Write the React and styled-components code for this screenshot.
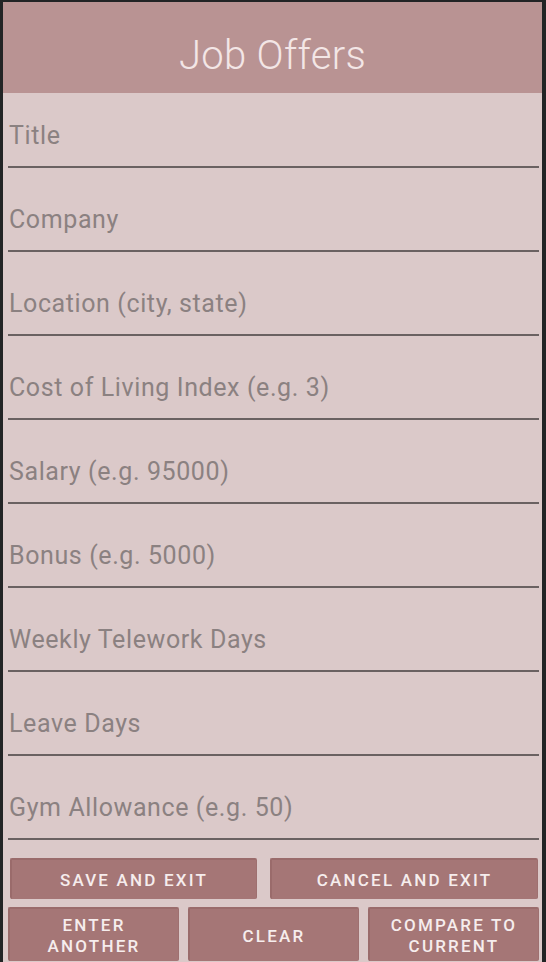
import React from 'react';
import styled, { createGlobalStyle } from 'styled-components';

const fields = [
  'Title',
  'Company',
  'Location (city, state)',
  'Cost of Living Index (e.g. 3)',
  'Salary (e.g. 95000)',
  'Bonus (e.g. 5000)',
  'Weekly Telework Days',
  'Leave Days',
  'Gym Allowance (e.g. 50)',
];

const GlobalStyle = createGlobalStyle`
  html, body {
    margin: 0;
    padding: 0;
    background: #222425;
  }
  * { box-sizing: border-box; }
`;

export default function App() {
  return (
    <>
      <GlobalStyle />
      <Screen>
        <Header>Job Offers</Header>
        <Form>
          {fields.map((f) => (
            <Field key={f}>
              <Placeholder>{f}</Placeholder>
            </Field>
          ))}
        </Form>
        <ButtonRow cols="247fr 268fr" pad="0 4px 0 7px" gap="13px">
          <Button>Save and Exit</Button>
          <Button>Cancel and Exit</Button>
        </ButtonRow>
        <ButtonRow cols="1fr 1fr 1fr" pad="0 3px 0 5px" gap="9px" top="8px">
          <Button tall>Enter<br />Another</Button>
          <Button tall>Clear</Button>
          <Button tall>Compare to<br />Current</Button>
        </ButtonRow>
      </Screen>
    </>
  );
}

const Screen = styled.div`
  margin: 2px 4px 0 3px;
  height: 960px;
  background: #dbc9c9;
  font-family: Roboto, "Liberation Sans", sans-serif;
  overflow: hidden;
`;

const Header = styled.div`
  height: 91px;
  background: #b99393;
  color: #f3e6e6;
  font-size: 40px;
  font-weight: 300;
  letter-spacing: 0.3px;
  display: flex;
  align-items: center;
  justify-content: center;
  padding-top: 16px;
`;

const Form = styled.div`
  display: flex;
  flex-direction: column;
  padding: 0 3px 0 5px;
`;

const Field = styled.div`
  height: 84px;
  display: flex;
  align-items: flex-end;
  padding: 0 0 16px 1px;
  border-bottom: 2px solid #6a6161;

  &:first-child {
    height: 75px;
  }
`;

const Placeholder = styled.span`
  font-size: 25px;
  letter-spacing: 0.6px;
  color: #8b8181;
  line-height: 28px;
`;

const ButtonRow = styled.div`
  display: grid;
  grid-template-columns: ${(p) => p.cols};
  gap: ${(p) => p.gap};
  padding: ${(p) => p.pad};
  margin-top: ${(p) => p.top || '18px'};
`;

const Button = styled.button`
  height: ${(p) => (p.tall ? '54px' : '41px')};
  background: #a57676;
  border: none;
  border-top: 2px solid #9a6b6b;
  border-left: 2px solid #9a6b6b;
  border-right: 1px solid #9e7070;
  border-radius: 2px;
  color: #f6eded;
  font-family: Roboto, "Liberation Sans", sans-serif;
  font-weight: 500;
  font-size: 17px;
  letter-spacing: 2.2px;
  line-height: 21px;
  text-transform: uppercase;
  display: flex;
  align-items: center;
  justify-content: center;
  text-align: center;
  padding: 2px 0 0;
`;
